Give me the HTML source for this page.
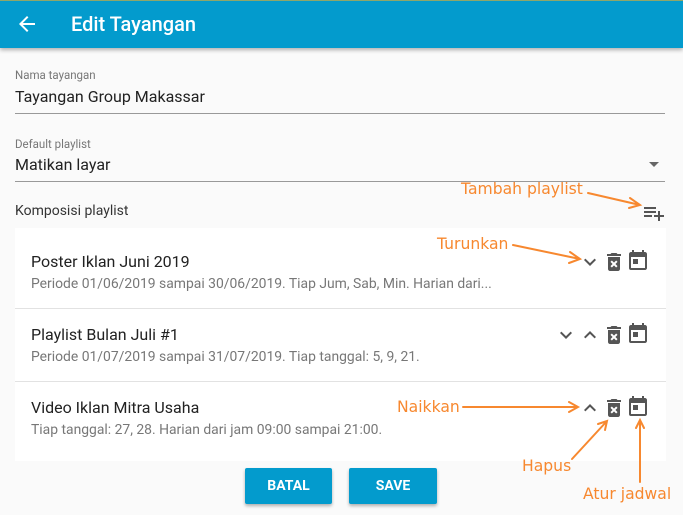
<!DOCTYPE html>
<html><head><meta charset="utf-8"><style>
*{margin:0;padding:0;box-sizing:border-box}
body{width:683px;height:515px;overflow:hidden;background:#fafafa;font-family:Roboto,"Liberation Sans",sans-serif;position:relative}
.abs{position:absolute;white-space:nowrap}
.hdr{left:0;top:0;width:683px;height:48px;background:#039bcd;border-top:1px solid #8fa66a;box-shadow:0 2px 4px rgba(0,0,0,.3)}
.lbl{font-size:11.5px;color:#777}
.val{font-size:16px;color:#222}
.line{height:1px;background:#999;left:15px;width:650px}
.card{left:15px;top:228px;width:651px;height:233px;background:#fff}
.t{font-size:16px;color:#222;left:31px}
.s{font-size:13.9px;color:#777;left:31px}
.sep{left:15px;width:651px;height:1px;background:#e2e2e2}
.btn{top:468px;height:36px;background:#039bcd;color:#fff;font-size:14px;font-weight:bold;text-align:center;line-height:36px;border-radius:2px;box-shadow:0 2px 3px rgba(0,0,0,.3)}
.o{color:#f7882f;font-family:"DejaVu Sans",sans-serif;font-size:15.6px}
svg.i{position:absolute;width:24px;height:24px}
</style></head><body>
<div class="abs hdr"></div>
<svg class="i" style="left:15px;top:12px" viewBox="0 0 24 24"><path fill="#fff" d="M20 11H7.83l5.59-5.59L12 4l-8 8 8 8 1.41-1.41L7.83 13H20v-2z"/></svg>
<div class="abs" style="left:71px;top:12px;font-size:20px;color:#fff;font-weight:500">Edit Tayangan</div>

<div class="abs lbl" style="left:15px;top:68px">Nama tayangan</div>
<div class="abs val" style="left:15px;top:87px">Tayangan Group Makassar</div>
<div class="abs line" style="top:113px"></div>

<div class="abs lbl" style="left:15px;top:137px">Default playlist</div>
<div class="abs val" style="left:15px;top:155px">Matikan layar</div>
<div class="abs" style="left:649px;top:162px;width:0;height:0;border-left:5px solid transparent;border-right:5px solid transparent;border-top:5px solid #666"></div>
<div class="abs line" style="top:181px"></div>

<div class="abs" style="left:15px;top:203px;font-size:14px;color:#333">Komposisi playlist</div>
<svg class="i" style="left:642px;top:201px" viewBox="0 0 24 24"><path fill="#555" d="M14 10H2v2h12v-2zm0-4H2v2h12V6zm4 8v-4h-2v4h-4v2h4v4h2v-4h4v-2h-4zM2 16h8v-2H2v2z"/></svg>

<div class="abs card"></div>
<div class="abs sep" style="top:308px"></div>
<div class="abs sep" style="top:381px"></div>
<div class="abs t" style="top:252px">Poster Iklan Juni 2019</div>
<div class="abs s" style="top:276px">Periode 01/06/2019 sampai 30/06/2019. Tiap Jum, Sab, Min. Harian dari...</div>
<div class="abs t" style="top:325px">Playlist Bulan Juli #1</div>
<div class="abs s" style="top:349px">Periode 01/07/2019 sampai 31/07/2019. Tiap tanggal: 5, 9, 21.</div>
<div class="abs t" style="top:398px">Video Iklan Mitra Usaha</div>
<div class="abs s" style="top:422px">Tiap tanggal: 27, 28. Harian dari jam 09:00 sampai 21:00.</div>

<svg class="i" style="left:578px;top:250px" viewBox="0 0 24 24"><path fill="#555" d="M7.41 8.59L12 13.17l4.59-4.58L18 10l-6 6-6-6z"/></svg>
<svg class="i" style="left:602px;top:250px" viewBox="0 0 24 24"><path fill="#555" d="M6 19c0 1.1.9 2 2 2h8c1.1 0 2-.9 2-2V7H6v12zm2.46-7.12l1.41-1.41L12 12.59l2.12-2.12 1.41 1.41L13.41 14l2.12 2.12-1.41 1.41L12 15.41l-2.12 2.12-1.41-1.41L10.59 14l-2.13-2.12zM15.5 4l-1-1h-5l-1 1H5v2h14V4z"/></svg>
<svg class="i" style="left:626px;top:249px" viewBox="0 0 24 24"><path fill="#555" d="M19 3h-1V1h-2v2H8V1H6v2H5c-1.11 0-2 .9-2 2v14a2 2 0 002 2h14c1.1 0 2-.9 2-2V5c0-1.1-.9-2-2-2zm0 16H5V8h14v11zM7 10h5v5H7z"/></svg>

<svg class="i" style="left:554px;top:323px" viewBox="0 0 24 24"><path fill="#555" d="M7.41 8.59L12 13.17l4.59-4.58L18 10l-6 6-6-6z"/></svg>
<svg class="i" style="left:578px;top:323px" viewBox="0 0 24 24"><path fill="#555" d="M7.41 15.41L12 10.83l4.59 4.58L18 14l-6-6-6 6z"/></svg>
<svg class="i" style="left:602px;top:323px" viewBox="0 0 24 24"><path fill="#555" d="M6 19c0 1.1.9 2 2 2h8c1.1 0 2-.9 2-2V7H6v12zm2.46-7.12l1.41-1.41L12 12.590l2.12-2.12 1.41 1.41L13.41 14l2.12 2.12-1.41 1.41L12 15.41l-2.12 2.12-1.410-1.41L10.59 14l-2.13-2.12zM15.5 4l-1-1h-5l-1 1H5v2h14V4z"/></svg>
<svg class="i" style="left:626px;top:322px" viewBox="0 0 24 24"><path fill="#555" d="M19 3h-1V1h-2v2H8V1H6v2H5c-1.11 0-2 .9-2 2v14a2 2 0 002 2h14c1.1 0 2-.9 2-2V5c0-1.1-.9-2-2-2zm0 16H5V8h14v11zM7 10h5v5H7z"/></svg>

<svg class="i" style="left:578px;top:396px" viewBox="0 0 24 24"><path fill="#555" d="M7.41 15.41L12 10.83l4.59 4.58L18 14l-6-6-6 6z"/></svg>
<svg class="i" style="left:602px;top:396px" viewBox="0 0 24 24"><path fill="#555" d="M6 19c0 1.1.9 2 2 2h8c1.1 0 2-.9 2-2V7H6v12zm2.46-7.12l1.41-1.41L12 12.59l2.12-2.12 1.41 1.41L13.41 14l2.12 2.12-1.41 1.41L12 15.41l-2.12 2.12-1.41-1.41L10.59 14l-2.13-2.12zM15.5 4l-1-1h-5l-1 1H5v2h14V4z"/></svg>
<svg class="i" style="left:626px;top:395px" viewBox="0 0 24 24"><path fill="#555" d="M19 3h-1V1h-2v2H8V1H6v2H5c-1.11 0-2 .9-2 2v14a2 2 0 002 2h14c1.1 0 2-.9 2-2V5c0-1.1-.9-2-2-2zm0 16H5V8h14v11zM7 10h5v5H7z"/></svg>

<div class="abs btn" style="left:245px;width:87px">BATAL</div>
<div class="abs btn" style="left:349px;width:88px">SAVE</div>

<div class="abs o" style="left:461px;top:180px">Tambah playlist</div>
<div class="abs o" style="left:437px;top:235px">Turunkan</div>
<div class="abs o" style="left:397px;top:398px">Naikkan</div>
<div class="abs o" style="left:522px;top:457px">Hapus</div>
<div class="abs o" style="left:583px;top:485px">Atur jadwal</div>
<svg class="abs" style="left:0;top:0;width:683px;height:515px" viewBox="0 0 683 515">
<g stroke="#f7882f" stroke-width="2" fill="none" stroke-linecap="round">
<path d="M588 193L640 205M630 198L640 205L629 208"/>
<path d="M513 245L580 259M570 252L580 259L569 263"/>
<path d="M463 407L578 407M569 402L578 407L569 412"/>
<path d="M572 459L607 421M598 424L607 421L605 430"/>
<path d="M640 482L640 420M636 428L640 420L644 428"/>
</g></svg>
</body></html>
